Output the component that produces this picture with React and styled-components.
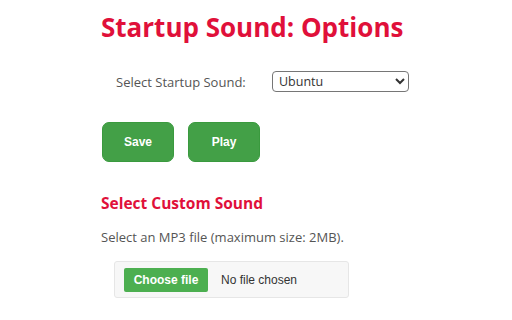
import styled, { createGlobalStyle } from "styled-components";

const GlobalStyle = createGlobalStyle`
  html, body {
    margin: 0;
    padding: 0;
    background: #fff;
  }
  body {
    font-family: "Open Sans", "Liberation Sans", sans-serif;
    color: #555;
  }
`;

const Page = styled.div`
  padding: 0 0 0 101px;
  width: 512px;
  height: 320px;
  box-sizing: border-box;
`;

const Title = styled.h1`
  margin: 0;
  padding-top: 9px;
  font-size: 26px;
  line-height: 36px;
  font-weight: 700;
  color: #e0103a;
`;

const Row = styled.div`
  display: flex;
  align-items: center;
  margin-top: 26px;
  padding-left: 15px;
`;

const Label = styled.label`
  width: 156px;
  font-size: 13px;
  color: #555;
`;

const Select = styled.select`
  width: 137px;
  height: 21px;
  font-family: "Open Sans", "Liberation Sans", sans-serif;
  font-size: 12.5px;
  color: #333;
  border: 1px solid #767676;
  border-radius: 4px;
  background: #fff;
  padding: 0 2px;
`;

const Buttons = styled.div`
  display: flex;
  gap: 14px;
  margin: 30px 0 0 1px;
`;

const GreenButton = styled.button`
  width: 72px;
  height: 40px;
  border: 1px solid #3a9a3e;
  border-radius: 7px;
  background: #43a047;
  color: #fff;
  font-family: "Liberation Sans", Arial, sans-serif;
  font-weight: 700;
  font-size: 12px;
`;

const SubTitle = styled.h2`
  margin: 31px 0 0;
  font-size: 15.5px;
  line-height: 21px;
  font-weight: 700;
  color: #e0103a;
`;

const Note = styled.p`
  margin: 14px 0 0;
  font-size: 13px;
  line-height: 18px;
  color: #555;
`;

const FileBox = styled.div`
  display: flex;
  align-items: center;
  gap: 13px;
  width: 235px;
  height: 37px;
  box-sizing: border-box;
  margin: 15px 0 0 13px;
  padding: 0 9px;
  background: #f7f7f7;
  border: 1px solid #e6e6e6;
  border-radius: 3px;
`;

const ChooseButton = styled.span`
  display: inline-flex;
  align-items: center;
  justify-content: center;
  width: 84px;
  height: 24px;
  background: #4caf50;
  border-radius: 2px;
  color: #fff;
  font-family: "Liberation Sans", Arial, sans-serif;
  font-weight: 700;
  font-size: 12px;
`;

const FileName = styled.span`
  font-family: "Liberation Sans", Arial, sans-serif;
  font-size: 12px;
  color: #333;
`;

export default function App() {
  return (
    <>
      <GlobalStyle />
      <Page>
        <Title>Startup Sound: Options</Title>
        <Row>
          <Label>Select Startup Sound:</Label>
          <Select defaultValue="ubuntu">
            <option value="ubuntu">Ubuntu</option>
            <option value="windows">Windows</option>
            <option value="mac">Mac</option>
          </Select>
        </Row>
        <Buttons>
          <GreenButton>Save</GreenButton>
          <GreenButton>Play</GreenButton>
        </Buttons>
        <SubTitle>Select Custom Sound</SubTitle>
        <Note>Select an MP3 file (maximum size: 2MB).</Note>
        <FileBox>
          <ChooseButton>Choose file</ChooseButton>
          <FileName>No file chosen</FileName>
        </FileBox>
      </Page>
    </>
  );
}
